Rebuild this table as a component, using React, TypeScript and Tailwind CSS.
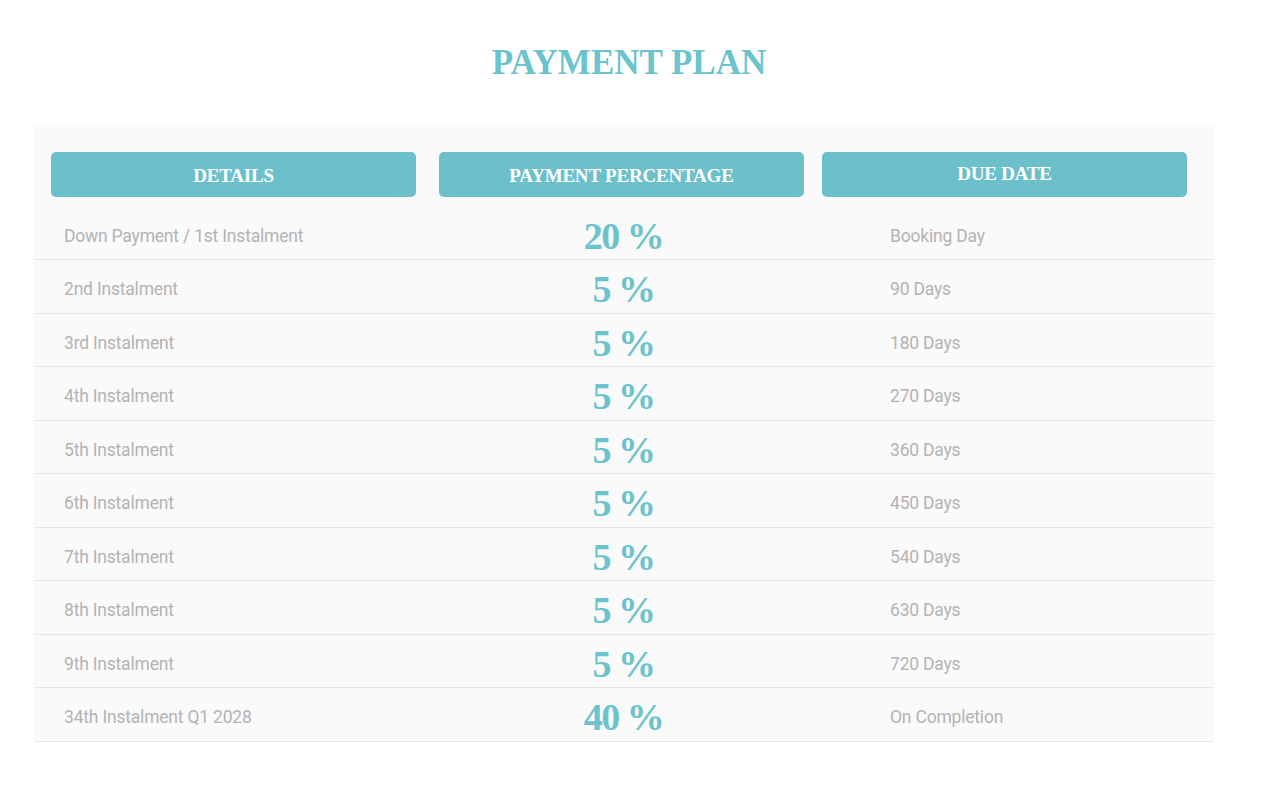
const rows = [
  { label: "Down Payment / 1st Instalment", pct: "20 %", due: "Booking Day" },
  { label: "2nd Instalment", pct: "5 %", due: "90 Days" },
  { label: "3rd Instalment", pct: "5 %", due: "180 Days" },
  { label: "4th Instalment", pct: "5 %", due: "270 Days" },
  { label: "5th Instalment", pct: "5 %", due: "360 Days" },
  { label: "6th Instalment", pct: "5 %", due: "450 Days" },
  { label: "7th Instalment", pct: "5 %", due: "540 Days" },
  { label: "8th Instalment", pct: "5 %", due: "630 Days" },
  { label: "9th Instalment", pct: "5 %", due: "720 Days" },
  { label: "34th Instalment Q1 2028", pct: "40 %", due: "On Completion" },
];

const serif = "font-['Liberation_Serif',serif]";
const sans = "font-['Roboto',sans-serif]";

function HeaderCell({ children, className = "" }: { children: React.ReactNode; className?: string }) {
  return (
    <div
      className={`h-[45px] w-[365px] rounded-[5px] bg-[#6bc0cb] flex items-center justify-center pt-[4px] text-white font-bold text-[19px] tracking-[-0.2px] uppercase ${serif} ${className}`}
    >
      {children}
    </div>
  );
}

export default function App() {
  return (
    <div className="min-h-[788px] w-[1280px] bg-white">
      <h1
        className={`pt-[43px] pr-[22px] text-center text-[35px] leading-[40px] font-bold text-[#6ac3cd] ${serif}`}
      >
        PAYMENT PLAN
      </h1>

      <div className="mt-[42px] ml-[34px] w-[1180px] bg-[#fafafa]">
        <div className="flex pt-[27px] pb-[9.5px] pl-[17px]">
          <HeaderCell>Details</HeaderCell>
          <HeaderCell className="ml-[23px]">Payment Percentage</HeaderCell>
          <HeaderCell className="ml-[18px] pb-[4px]">Due Date</HeaderCell>
        </div>

        {rows.map((r) => (
          <div
            key={r.label}
            className="grid grid-cols-[393px_393px_1fr] h-[53.5px] items-center border-b border-[#e6e6e6]"
          >
            <div className={`pl-[30px] pt-[6px] text-[17.5px] tracking-[-0.2px] text-[#b3b3b3] ${sans}`}>{r.label}</div>
            <div className={`pt-[6px] text-center text-[38px] leading-none font-bold tracking-[-1.5px] text-[#6ac3cd] ${serif}`}>
              {r.pct}
            </div>
            <div className={`pl-[70px] pt-[6px] text-[17.5px] tracking-[-0.2px] text-[#b3b3b3] ${sans}`}>{r.due}</div>
          </div>
        ))}
      </div>
    </div>
  );
}
